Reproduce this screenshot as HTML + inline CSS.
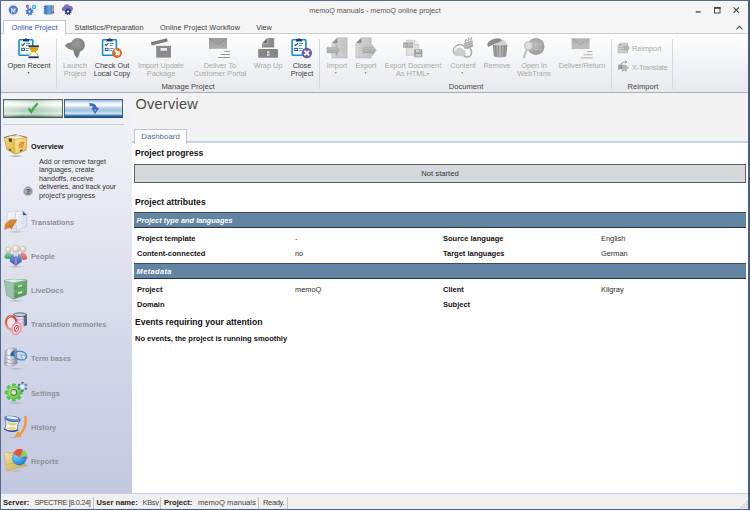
<!DOCTYPE html>
<html><head><meta charset="utf-8">
<style>
*{box-sizing:border-box;margin:0;padding:0}
html,body{width:750px;height:510px;overflow:hidden;background:#f3f4f6}
body{font-family:"Liberation Sans","DejaVu Sans",sans-serif;font-size:7.6px;color:#333;position:relative}
.abs{position:absolute}
#win{position:absolute;left:0;top:0;width:750px;height:510px;border:1px solid #566a8e;border-right:2px solid #465d88;border-bottom-color:#465d88;overflow:hidden;background:#f3f4f6}
#title{position:absolute;left:0;top:0;width:748px;height:19px;background:#f5f5f6}
#title .t{position:absolute;left:0;width:748px;text-align:center;top:5px;font-size:7.2px;color:#555}
#tabs{position:absolute;left:0;top:19px;width:748px;height:14px;background:#f5f5f6;border-bottom:1px solid #c9cdd6}
.tab{position:absolute;top:2px;height:12px;line-height:11px;font-size:7.3px;color:#3b3b3b;text-align:center;white-space:nowrap}
.tab.act{top:0px;height:14px;line-height:13.500px;background:#fff;border:1px solid #c3c8d2;border-bottom:none;color:#2b579a;height:15px}
#ribbon{position:absolute;left:0;top:33px;width:748px;height:59px;background:linear-gradient(#ffffff,#f3f4f7 45%,#e6e8ec);border-bottom:1px solid #a9aeb7}
.rb{position:absolute;top:28px;text-align:center;font-size:7.3px;line-height:8.2px;color:#a9a9a9;white-space:nowrap;transform:translateX(-50%)}
.rb.on{color:#3a3a3a}
.dd{display:inline-block;position:relative;top:-2.700px;left:-1px;width:0;height:0;border-left:1.800px solid transparent;border-right:1.800px solid transparent;border-top:2px solid #8a8a8a}.rb.on .dd{border-top-color:#555}
.grp{position:absolute;top:48px;font-size:7.6px;color:#444;transform:translateX(-50%);white-space:nowrap}
.sep{position:absolute;top:5px;width:1px;height:50px;background:#d4d7de}
.ic{position:absolute}
#strip{position:absolute;left:0;top:92px;width:748px;height:5px;background:#f2f2f3}
#left{position:absolute;left:0;top:92px;width:131px;height:400px;background:linear-gradient(#f1f2f6 0,#ecedf3 20%,#d6d9ea 60%,#c3c7e0 100%)}
.nav{position:absolute;left:30px;font-size:7.3px;font-weight:bold;color:#909098;white-space:nowrap}
#main{position:absolute;left:131px;top:92px;width:616px;height:400px;background:#fff}
#mainhead{position:absolute;left:0;top:0;width:616px;height:50px;background:#f2f2f3;border-bottom:2px solid #c9d3e1}
#status{position:absolute;left:0;top:492px;width:748px;height:16px;background:#f0f0f1;border-top:1px solid #c9cde0;font-size:7.6px;line-height:15px;color:#444;white-space:nowrap}
.st{position:absolute;top:0.500px;font-style:normal}#status b{color:#222}.vs{position:absolute;top:3px;width:1px;height:12px;background:#c4c4c8}
.h{position:absolute;font-weight:bold;font-size:8.6px;color:#111;white-space:nowrap}
.lbl{position:absolute;font-weight:bold;font-size:7.5px;color:#111;white-space:nowrap}
.val{position:absolute;font-size:7.4px;color:#2a2a2a;white-space:nowrap}
.bar{position:absolute;left:2px;width:612px;height:16px;background:#6283a1;border-top:1px solid #3a4c5e;border-bottom:1px solid #27333f;color:#fff;font-style:italic;font-weight:bold;font-size:7.4px;line-height:15.500px;padding-left:2.600px}
</style></head><body>
<div id="win">
 <div id="title"><div class="t">memoQ manuals - memoQ online project</div>
  <svg class="abs" style="left:0;top:0" width="748" height="19" viewBox="0 0 748 19">
   <rect x="694.700" y="10.300" width="5" height="1.300" fill="#444"/>
   <rect x="713.500" y="6.500" width="5.500" height="5.500" fill="none" stroke="#444" stroke-width="1"/><rect x="713" y="6" width="6.500" height="1.800" fill="#444"/>
   <path d="M732.500 6.300 l5.500 5.500 M738 6.300 l-5.500 5.500" stroke="#444" stroke-width="1.2" fill="none"/>
  </svg>
 </div>
 <div id="tabs">
  <div class="tab act" style="left:2px;width:63px">Online Project</div>
  <div class="tab" style="left:65px;width:86px">Statistics/Preparation</div>
  <div class="tab" style="left:150px;width:98px;letter-spacing:0.1px">Online Project Workflow</div>
  <div class="tab" style="left:247px;width:32px">View</div>
  <svg class="abs" style="left:733px;top:4px" width="10" height="8"><path d="M2.500 5.300 l3-3 l3 3" stroke="#555" stroke-width="1.200" fill="none"/></svg>
 </div>
 <div id="ribbon">
  <div class="rb on" style="left:28px">Open Recent<br><i class="dd"></i></div>
  <div class="sep" style="left:55px"></div>
  <div class="rb" style="left:74px">Launch<br>Project</div>
  <div class="rb on" style="left:111px">Check Out<br>Local Copy</div>
  <div class="rb" style="left:160px">Import Update<br>Package</div>
  <div class="rb" style="left:219px">Deliver To<br>Customer Portal</div>
  <div class="rb" style="left:267px">Wrap Up</div>
  <div class="rb on" style="left:301px">Close<br>Project</div>
  <div class="grp" style="left:187px">Manage Project</div>
  <div class="sep" style="left:318px"></div>
  <div class="rb" style="left:336px">Import<br><i class="dd"></i></div>
  <div class="rb" style="left:365px">Export<br><i class="dd"></i></div>
  <div class="rb" style="left:412px">Export Document<br>As HTML <i class="dd" style="top:-1.500px;margin-left:0"></i></div>
  <div class="rb" style="left:462px">Content<br><i class="dd"></i></div>
  <div class="rb" style="left:496px">Remove</div>
  <div class="rb" style="left:533px">Open in<br>WebTrans</div>
  <div class="rb" style="left:581px">Deliver/Return</div>
  <div class="grp" style="left:465px">Document</div>
  <div class="sep" style="left:610px"></div>
  <div class="rb" style="left:646px;top:11px;transform:none;left:631px">Reimport</div>
  <div class="rb" style="left:646px;top:30px;transform:none;left:631px;letter-spacing:-0.2px">X-Translate</div>
  <div class="grp" style="left:642px">Reimport</div>
  <div class="sep" style="left:671px"></div>
 </div>
 <div id="main">
  <div id="mainhead">
   <div class="abs" style="left:3.500px;top:3px;font-size:14.5px;color:#4a4a4a;letter-spacing:0.25px">Overview</div>
   <div class="abs" style="left:2px;top:36px;width:53px;height:15px;background:#fff;border:1px solid #b9c6d8;border-bottom:none;text-align:center;font-size:7.9px;line-height:13px;color:#4a6a94">Dashboard</div>
  </div>
  <div class="h" style="left:3px;top:55px">Project progress</div>
  <div class="abs" style="left:2px;top:71px;width:612px;height:19px;background:#d6d9dc;border:1px solid #5c6064;text-align:center;font-size:7.7px;line-height:17.800px;color:#333">Not started</div>
  <div class="h" style="left:3px;top:104px">Project attributes</div>
  <div class="bar" style="top:119px">Project type and languages</div>
  <div class="lbl" style="left:5px;top:141px">Project template</div><div class="val" style="left:163px;top:141px">-</div>
  <div class="lbl" style="left:311px;top:141px">Source language</div><div class="val" style="left:469px;top:141px">English</div>
  <div class="lbl" style="left:5px;top:156px">Content-connected</div><div class="val" style="left:163px;top:156px">no</div>
  <div class="lbl" style="left:311px;top:156px">Target languages</div><div class="val" style="left:469px;top:156px">German</div>
  <div class="bar" style="top:170px" ><span style="letter-spacing:0.4px">Metadata</span></div>
  <div class="lbl" style="left:5px;top:192.300px">Project</div><div class="val" style="left:163px;top:192.300px">memoQ</div>
  <div class="lbl" style="left:311px;top:192.300px">Client</div><div class="val" style="left:469px;top:192.300px">Kilgray</div>
  <div class="lbl" style="left:5px;top:206.500px">Domain</div>
  <div class="lbl" style="left:311px;top:206.500px">Subject</div>
  <div class="h" style="left:3px;top:224px">Events requiring your attention</div>
  <div class="lbl" style="left:3px;top:241px">No events, the project is running smoothly</div>
 </div>
 <div id="left">
  <div class="abs" style="left:2px;top:6px;width:60px;height:19px;border:1px solid #5a6a60;border-bottom-color:#3f5a49;background:linear-gradient(90deg,rgba(255,255,255,.35),rgba(255,255,255,0) 30%,rgba(120,170,140,.18) 55%,rgba(255,255,255,.3) 90%),linear-gradient(#9dbfa9 0,#e9f3ec 12%,#fbfdfb 28%,#c5dccd 50%,#b6d2c0 65%,#d6e7dc 80%,#9dbfa9 90%,#5b8a6c 96%,#3e6b4f 100%)"></div>
  <div class="abs" style="left:63px;top:6px;width:59px;height:19px;border:1px solid #4a5a7c;border-bottom-color:#2a4a7a;background:linear-gradient(#8fb0dc 0,#dbe8f5 14%,#ffffff 30%,#bcd6ea 45%,#a3c6e0 56%,#a9cbe4 68%,#d9e8f4 79%,#7aaad6 87%,#2a6cb0 94%,#15508f 100%)"></div>
  <div class="abs" style="left:2px;top:31px;width:121px;height:1px;background:#c9cbd3"></div>
  <div class="nav" style="top:48.500px;color:#111">Overview</div>
  <div class="abs" style="left:38px;top:65px;font-size:7.15px;line-height:8.4px;color:#333">Add or remove target<br><span style="letter-spacing:-0.08px">languages, create</span><br>handoffs, receive<br><span style="letter-spacing:-0.1px">deliveries, and track your</span><br>project's progress</div>
  <div class="nav" style="top:125px">Translations</div>
  <div class="nav" style="top:159px">People</div>
  <div class="nav" style="top:193px">LiveDocs</div>
  <div class="nav" style="top:227px">Translation memories</div>
  <div class="nav" style="top:261px">Term bases</div>
  <div class="nav" style="top:296px">Settings</div>
  <div class="nav" style="top:330px">History</div>
  <div class="nav" style="top:364px">Reports</div>
 </div>
 <div id="status">
  <b class="st" style="left:2px">Server:</b><span class="st" style="left:33.500px;letter-spacing:-0.47px">SPECTRE [8.0.24]</span><i class="vs" style="left:92px"></i>
  <b class="st" style="left:95.500px">User name:</b><span class="st" style="left:141.500px;letter-spacing:-0.4px">KBsv</span><i class="vs" style="left:159px"></i>
  <b class="st" style="left:163px">Project:</b><span class="st" style="left:197px">memoQ manuals</span><i class="vs" style="left:257px"></i>
  <span class="st" style="left:262px;letter-spacing:-0.4px">Ready.</span><i class="vs" style="left:286px"></i>
 </div>
<svg class="abs" style="left:-1px;top:-1px;pointer-events:none" width="750" height="510" viewBox="0 0 750 510">
<defs>
 <linearGradient id="gDoc" x1="0" y1="0" x2="1" y2="0"><stop offset="0" stop-color="#dcdcdc"/><stop offset="1" stop-color="#c4c4c4"/></linearGradient>
 <linearGradient id="gArr" x1="0" y1="0" x2="0" y2="1"><stop offset="0" stop-color="#c9c9c9"/><stop offset="1" stop-color="#9c9c9c"/></linearGradient>
 <radialGradient id="gBall" cx="0.4" cy="0.4" r="0.7"><stop offset="0" stop-color="#9a9a9a"/><stop offset="1" stop-color="#7e7e7e"/></radialGradient>
 <linearGradient id="gEnv" x1="0" y1="0" x2="0" y2="1"><stop offset="0" stop-color="#9a9a9a"/><stop offset="1" stop-color="#adadad"/></linearGradient>
 
 
</defs>

<!-- title bar small icons -->
<g>
 <defs><radialGradient id="gOrb" cx="0.500" cy="0.400" r="0.600"><stop offset="0" stop-color="#6f9ae0"/><stop offset="0.700" stop-color="#4472c4"/><stop offset="1" stop-color="#aebfe6"/></radialGradient>
 <linearGradient id="gNb" x1="0" y1="0" x2="1" y2="0"><stop offset="0" stop-color="#2f74c8"/><stop offset="0.600" stop-color="#6aa6e2"/><stop offset="1" stop-color="#3a80d0"/></linearGradient></defs>
 <circle cx="13.300" cy="10.100" r="4.700" fill="url(#gOrb)"/>
 <path d="M11.300 8 q0.800 2.500 0.300 4.800 M15.200 8 q-0.800 2.500-0.300 4.800 M12.300 9 l1 3 l1-3" stroke="#eef3fc" stroke-width="0.800" fill="none"/>
 <circle cx="29.500" cy="11.600" r="3.300" fill="none" stroke="#3d7cc9" stroke-width="1.400" stroke-dasharray="1.300 1.290"/>
 <circle cx="29.500" cy="11.600" r="2.900" fill="#3d7cc9"/><circle cx="29.500" cy="11.600" r="1.100" fill="#e8f0fa"/>
 <circle cx="34.100" cy="7" r="2.300" fill="#3fb4dc"/><circle cx="34.100" cy="7" r="0.900" fill="#d8f1f8"/>
 <rect x="26.100" y="4.900" width="2.700" height="2.800" fill="#8c4a9e"/><rect x="27" y="5.800" width="0.900" height="0.900" fill="#dcc4e4"/>
 <rect x="44.500" y="5.300" width="8" height="9.300" rx="1" fill="url(#gNb)"/>
 <rect x="43.600" y="6.200" width="2" height="1" rx="0.500" fill="#2458a6"/><rect x="43.600" y="8.300" width="2" height="1" rx="0.500" fill="#2458a6"/><rect x="43.600" y="10.400" width="2" height="1" rx="0.500" fill="#2458a6"/><rect x="43.600" y="12.500" width="2" height="1" rx="0.500" fill="#2458a6"/>
 <rect x="52.500" y="5.500" width="1.600" height="2.500" fill="#5cae4a"/><rect x="52.500" y="8.200" width="1.600" height="2.600" fill="#e7792b"/><rect x="52.500" y="11" width="1.600" height="2.500" fill="#8e44ad"/>
 <path d="M63 11 a2.500 2.500 0 0 1 0.800-4.600 a3.300 3.300 0 0 1 6-0.300 a2.500 2.500 0 0 1 1.200 4.900 z" fill="#8670be"/>
 <circle cx="68" cy="11.600" r="2.800" fill="none" stroke="#2a3a80" stroke-width="1.400" stroke-dasharray="1.100 1.100"/>
 <circle cx="68" cy="11.600" r="2.600" fill="#2a3a80"/><circle cx="68" cy="11.600" r="1.150" fill="#f4f5f7"/>
</g>

<!-- ribbon: Open Recent -->
<g transform="translate(18.200 37.600)">
  <rect x="0.800" y="2.100" width="13.800" height="15.500" rx="0.800" fill="#fff" stroke="#0c8fd9" stroke-width="1.600"/>
  <path d="M4.700 3.900 v-2.500 h1.800 q1.250-1.700 2.500 0 h1.800 v2.500 z" fill="#1f3882"/>
  <path d="M3.300 6.700 l1.200 1.200 l2.100-2.400" stroke="#1f3882" stroke-width="1.100" fill="none"/>
  <rect x="7.700" y="5.500" width="4.100" height="0.850" fill="#1490d8"/><rect x="7.700" y="7.500" width="2.800" height="0.850" fill="#1490d8"/>
  <rect x="3.500" y="10.700" width="2.800" height="2.300" fill="#fff" stroke="#26408a" stroke-width="0.900"/>
  <rect x="7.700" y="10.600" width="4.100" height="0.850" fill="#1490d8"/><rect x="7.700" y="12.500" width="2.800" height="0.850" fill="#1490d8"/>
 </g>
<g>
 <rect x="28.800" y="46.200" width="9.800" height="10.800" fill="#fff"/>
 <path d="M29.500 47 h8.600 q0 3.500-3.300 5 q3.300 1.500 3.300 4.600 h-8.600 q0-3.100 3.300-4.600 q-3.300-1.500-3.300-5 z" fill="#fff" stroke="#d9a500" stroke-width="0.900"/>
 <path d="M29.500 47 h8.600 q0 2.800-2 4.200 q-2.300 1.400-4.600 0 q-2-1.400-2-4.200 z" fill="#d9a500"/>
 <rect x="28.400" y="45.300" width="10.400" height="1.700" fill="#1f3882"/><rect x="28.400" y="56.500" width="10.400" height="1.700" fill="#1f3882"/>
</g>
<!-- Launch Project -->
<g>
 <path d="M64.600 45.300 Q68 42.400 71.800 42.200 L72.600 50.200 Q68 49.600 64.600 45.300 z" fill="#858585"/>
 <path d="M73.200 50.500 L80 51 Q79.600 55 77.500 58 Q76.800 58.300 76.300 57.600 Q74.300 55 73.200 50.500 z" fill="#7e7e7e"/>
 <circle cx="77.800" cy="45" r="7.100" fill="url(#gBall)"/>
 <path d="M76.500 38.200 q-3.800 6.800 0.300 13.500" stroke="#777" stroke-width="0.600" fill="none" opacity="0.500"/>
</g>
<!-- Check out -->
<g transform="translate(101.800 37.600)">
  <rect x="0.800" y="2.100" width="13.800" height="15.500" rx="0.800" fill="#fff" stroke="#0c8fd9" stroke-width="1.600"/>
  <path d="M4.700 3.900 v-2.500 h1.800 q1.250-1.700 2.500 0 h1.800 v2.500 z" fill="#1f3882"/>
  <path d="M3.300 6.700 l1.200 1.200 l2.100-2.400" stroke="#1f3882" stroke-width="1.100" fill="none"/>
  <rect x="7.700" y="5.500" width="4.100" height="0.850" fill="#1490d8"/><rect x="7.700" y="7.500" width="2.800" height="0.850" fill="#1490d8"/>
  <rect x="3.500" y="10.700" width="2.800" height="2.300" fill="#fff" stroke="#26408a" stroke-width="0.900"/>
  <rect x="7.700" y="10.600" width="4.100" height="0.850" fill="#1490d8"/><rect x="7.700" y="12.500" width="2.800" height="0.850" fill="#1490d8"/>
 </g>
<circle cx="117" cy="53" r="5" fill="#e2661f"/>
<path d="M114.300 50.400 l1.300-1.300 l2.700 2.700 l1.400-1.400 v4.900 h-4.900 l1.400-1.400 z" fill="#fff"/>
<!-- Import Update Package -->
<path d="M150.800 42.200 L167 38.300 L167.800 41.600 L151.600 45.500 z" fill="#7c7c7c"/>
<rect x="156.200" y="45.800" width="14.800" height="11.800" fill="#8b8b8b"/>
<rect x="160.500" y="48" width="6.500" height="2.700" fill="#ededed"/>
<!-- Deliver to customer portal -->
<g transform="translate(209 38)">
  <rect x="0" y="0" width="18" height="10.800" fill="url(#gEnv)"/>
  <path d="M0.300 0.300 L9 6.300 L17.700 0.300" stroke="#8a8a8a" stroke-width="0.900" fill="none"/>
  <rect x="15.500" y="12.900" width="5.500" height="0.900" fill="#8d8d8d"/><rect x="11.800" y="16" width="9.200" height="0.900" fill="#8d8d8d"/><rect x="9" y="19.100" width="12" height="0.900" fill="#8d8d8d"/>
 </g>
<!-- Wrap up -->
<path d="M267.500 38.100 h6.700 v9.400 h-12.200 v-4 z" fill="#8c8c8c"/>
<path d="M267.500 38.100 v5.400 h-5.500 z" fill="#6f6f6f"/>
<path d="M267.900 38.100 v5.800 h-5.900" stroke="#d5d5d5" stroke-width="0.700" fill="none"/>
<rect x="258.200" y="49" width="19.800" height="8.700" rx="1.200" fill="#858585"/>
<rect x="267" y="51" width="2.500" height="5" fill="#d0d0d0"/><rect x="267" y="53.200" width="2.500" height="0.700" fill="#9a9a9a"/>
<!-- Close project -->
<g transform="translate(291.300 37.600)">
  <rect x="0.800" y="2.100" width="13.800" height="15.500" rx="0.800" fill="#fff" stroke="#0c8fd9" stroke-width="1.600"/>
  <path d="M4.700 3.900 v-2.500 h1.800 q1.250-1.700 2.500 0 h1.800 v2.500 z" fill="#1f3882"/>
  <path d="M3.300 6.700 l1.200 1.200 l2.100-2.400" stroke="#1f3882" stroke-width="1.100" fill="none"/>
  <rect x="7.700" y="5.500" width="4.100" height="0.850" fill="#1490d8"/><rect x="7.700" y="7.500" width="2.800" height="0.850" fill="#1490d8"/>
  <rect x="3.500" y="10.700" width="2.800" height="2.300" fill="#fff" stroke="#26408a" stroke-width="0.900"/>
  <rect x="7.700" y="10.600" width="4.100" height="0.850" fill="#1490d8"/><rect x="7.700" y="12.500" width="2.800" height="0.850" fill="#1490d8"/>
 </g>
<circle cx="306.800" cy="53" r="5.200" fill="#6b59a7"/>
<path d="M304.400 50.600 l4.800 4.800 M309.200 50.600 l-4.800 4.800" stroke="#fff" stroke-width="1.900" fill="none"/>
<!-- Import -->
<g>
 <path d="M337.500 37.800 h9.600 v20.100 h-15.100 v-14.600 z" fill="url(#gDoc)" stroke="#a9a9a9" stroke-width="0.600"/>
 <path d="M337.500 37.800 v5.500 h-5.500 z" fill="#8e8e8e"/>
 <path d="M339 41.500 h6.500 M334 45 h11.500 M334 48 h11.500 M341 51 h4.500 M341 53.500 h4.500 M334 56 h6" stroke="#b5b5b5" stroke-width="0.600"/>
 <path d="M327 47.300 h9 v-2.500 l4 5.400 l-4 5.400 v-2.700 h-9 z" fill="url(#gArr)" stroke="#a0a0a0" stroke-width="0.500"/>
</g>
<!-- Export -->
<g>
 <path d="M361.500 37.800 h9.600 v20.100 h-15.100 v-14.600 z" fill="url(#gDoc)" stroke="#a9a9a9" stroke-width="0.600"/>
 <path d="M361.500 37.800 v5.500 h-5.500 z" fill="#8e8e8e"/>
 <path d="M363 41.500 h6.500 M358 45 h11.500 M358 48 h5 M358 51 h5 M358 53.500 h5 M358 56 h6" stroke="#b5b5b5" stroke-width="0.600"/>
 <path d="M363 47.300 h9 v-2.500 l4.300 5.400 l-4.300 5.400 v-2.700 h-9 z" fill="url(#gArr)" stroke="#a0a0a0" stroke-width="0.500"/>
</g>
<!-- Export as HTML -->
<g>
 <path d="M406.200 40.100 h8.300 l4.500 4.500 v10.700 h-12.800 z" fill="#dedede" stroke="#c4c4c4" stroke-width="0.600"/>
 <path d="M414.500 40.100 v4.500 h4.500" fill="#efefef" stroke="#c4c4c4" stroke-width="0.600"/>
 <rect x="403.200" y="42.500" width="9.700" height="5.200" fill="#a2a2a2"/>
 <path d="M404.800 43.800 v2.600 M406.300 43.800 v2.600 M404.800 45.100 h1.500 M407.500 43.800 h1.800 M408.400 43.800 v2.600 M410.300 46.400 v-2.600 l0.800 1.200 l0.800-1.200 v2.600" stroke="#d4d4d4" stroke-width="0.600" fill="none"/>
 <rect x="414.300" y="49.200" width="8" height="8" rx="0.600" fill="#9a9a9a"/>
 <rect x="416" y="49.800" width="4.600" height="2.600" fill="#d9d9d9"/><rect x="418.700" y="50.200" width="1.100" height="1.800" fill="#9a9a9a"/>
 <rect x="415.500" y="54" width="5.600" height="2.600" fill="#c9c9c9"/>
</g>
<!-- Content -->
<g>
 <path d="M470 48 q2.300 3 1.300 6 q-1.300 3.300-4.500 3 q-2-0.200-3-1.500" stroke="#a9a9a9" stroke-width="1.500" fill="none"/>
 <path d="M453.600 53.500 q-1.200-4.500 2-7.300 q3.700-3 7.500-0.700 q1.600 1.200 2.400 3.300" stroke="#acacac" stroke-width="1.300" fill="none"/>
 <path d="M456 55.600 a2.700 2.700 0 0 1 0.200-5.300 a3.800 3.800 0 0 1 6.800-0.300 a2.900 2.900 0 0 1 0.600 5.600 z" fill="#cdcdcd" stroke="#bababa" stroke-width="0.500"/>
 <path d="M463.700 43.300 l8-3 l1 0.800 l0.300 5.500 l-5.800 2.600 q-3-1.400-3.500-5.900 z" fill="#a9a9a9"/>
 <path d="M465 42.300 l1.300-3.600 M467.800 41.300 l1.300-3.800 M470.600 40.300 l1.200-3.300" stroke="#a9a9a9" stroke-width="1.400"/>
 <path d="M464.300 44.800 l8.300-3.100 M464.900 46.800 l8-3" stroke="#d6d6d6" stroke-width="0.700"/>
</g>
<!-- Remove -->
<g>
 <defs><linearGradient id="gBin" x1="0" y1="0" x2="1" y2="0"><stop offset="0" stop-color="#8e8e8e"/><stop offset="0.500" stop-color="#bdbdbd"/><stop offset="1" stop-color="#8a8a8a"/></linearGradient></defs>
 <path d="M494.500 45 q2.500-4.800 7-5.300 q4.500 0 5.600 5.300 z" fill="#d4d4d4"/>
 <path d="M492.700 44.900 h14.700 l-1.200 11.500 q-6.100 2.200-12.300 0 z" fill="url(#gBin)"/>
 <path d="M495.600 46 l0.600 10.600 M498.500 46 l0.300 11.200 M501.500 46 l-0.300 11.200 M504.400 46 l-0.600 10.600" stroke="#7c7c7c" stroke-width="0.800" opacity="0.800"/>
 <path d="M487.300 44.300 Q488 41 493 39.300 Q498.500 37.300 501.300 39.300 L501.800 40.800 L488 47 z" fill="#8b8b8b"/>
</g>
<!-- Open in WebTrans -->
<g>
 <defs><radialGradient id="gGlobe" cx="0.450" cy="0.400" r="0.700"><stop offset="0" stop-color="#bdbdbd"/><stop offset="1" stop-color="#8c8c8c"/></radialGradient></defs>
 <circle cx="536" cy="46.500" r="8.500" fill="url(#gGlobe)"/>
 <path d="M528 44 h16 M528.500 49.500 h15.500 M536 38 v17 M532 39 q-2.500 7.500 0 15 M540 39 q2.500 7.500 0 15" stroke="#c9c9c9" stroke-width="0.600" fill="none" opacity="0.800"/>
 <path d="M526.800 49.500 L523.800 57.500" stroke="#c3c3c3" stroke-width="2.200" stroke-linecap="round"/>
 <circle cx="528.600" cy="45.800" r="4" fill="#dedede" stroke="#bdbdbd" stroke-width="1.100"/>
</g>
<!-- Deliver/Return -->
<g transform="translate(571.600 38.300)" opacity="0.750">
  <rect x="0" y="0" width="18" height="10.800" fill="url(#gEnv)"/>
  <path d="M0.300 0.300 L9 6.300 L17.700 0.300" stroke="#8a8a8a" stroke-width="0.900" fill="none"/>
  <rect x="15.500" y="12.900" width="5.500" height="0.900" fill="#8d8d8d"/><rect x="11.800" y="16" width="9.200" height="0.900" fill="#8d8d8d"/><rect x="9" y="19.100" width="12" height="0.900" fill="#8d8d8d"/>
 </g>
<!-- Reimport small -->
<g>
 <path d="M620.500 43.200 h7 v9.600 h-9.400 v-7.200 z" fill="#cfcfcf" stroke="#a9a9a9" stroke-width="0.600"/>
 <path d="M620.500 43.200 v2.400 h-2.400 z" fill="#9a9a9a"/>
 <path d="M619.500 47.500 h6.500 M619.500 49.500 h6.500" stroke="#a5a5a5" stroke-width="0.600"/>
 <path d="M624 46 h3.200 v-1.500 l2.300 3.600 l-2.300 3.600 v-1.600 h-3.200 z" fill="#b5b5b5" stroke="#9a9a9a" stroke-width="0.400"/>
</g>
<!-- X-translate small -->
<g>
 <path d="M618.200 64.500 h4.500 v5.500 l-2.200-1.200 l-2.300 1.200 z" fill="#9c9c9c"/>
 <path d="M622.200 65.500 h4 v5.800 l-2 -1.200 l-2 1.200 z" fill="#b9b9b9" stroke="#8f8f8f" stroke-width="0.500"/>
 <path d="M621 64 q2-2.800 5.500-2 M625.300 60.600 l1.700 1.500 l-2 1.200" stroke="#8f8f8f" stroke-width="0.900" fill="none"/>
 <path d="M626.500 66.500 l1.800 1.200 l-1.800 1.200" stroke="#8f8f8f" stroke-width="0.700" fill="none"/>
</g>
<!-- left panel buttons glyphs -->
<path d="M28.800 108.300 L31.300 112 Q33.800 107 37.800 103.300" stroke="#1d6a28" stroke-width="2.300" fill="none" opacity="0.450"/><path d="M28.800 108.300 L31.300 112 Q33.800 107 37.800 103.300" stroke="#2aa838" stroke-width="1.400" fill="none"/>
<path d="M89 103.500 h3 q3.800 0.300 4.800 4.500 h1.800 l-3.600 5.700 l-3.300-5.700 h1.800 q-0.500-2-1.800-2.300 h-2.500 l1-1.100 z" fill="#3d6cbc" stroke="#2f57a8" stroke-width="0.400"/><path d="M94 109.500 h2.200 l-1.200 2 z" fill="#a9c6ea"/>

<defs>
 <radialGradient id="gSh" cx="0.500" cy="0.500" r="0.500"><stop offset="0" stop-color="#8b93a8" stop-opacity="0.750"/><stop offset="1" stop-color="#8b93a8" stop-opacity="0"/></radialGradient>
 <linearGradient id="gBoxL" x1="0" y1="0" x2="1" y2="1"><stop offset="0" stop-color="#f3dc7c"/><stop offset="1" stop-color="#d9b23c"/></linearGradient>
 <linearGradient id="gBoxR" x1="0" y1="0" x2="1" y2="1"><stop offset="0" stop-color="#f8e79a"/><stop offset="1" stop-color="#e3c557"/></linearGradient>
 <linearGradient id="gOr" x1="0" y1="0" x2="1" y2="1"><stop offset="0" stop-color="#e89a4a"/><stop offset="1" stop-color="#c4681c"/></linearGradient>
 <linearGradient id="gPaper" x1="0" y1="0" x2="1" y2="1"><stop offset="0" stop-color="#ffffff"/><stop offset="1" stop-color="#cfdaec"/></linearGradient>
 <radialGradient id="gHead" cx="0.400" cy="0.350" r="0.700"><stop offset="0" stop-color="#fffdf6"/><stop offset="1" stop-color="#c9bda6"/></radialGradient>
 <linearGradient id="gGrn" x1="0" y1="0" x2="1" y2="1"><stop offset="0" stop-color="#b5d5c0"/><stop offset="1" stop-color="#4d8a64"/></linearGradient>
 <linearGradient id="gGrn2" x1="0" y1="0" x2="0" y2="1"><stop offset="0" stop-color="#7dbb74"/><stop offset="1" stop-color="#559a52"/></linearGradient>
 <linearGradient id="gSilver" x1="0" y1="0" x2="1" y2="0"><stop offset="0" stop-color="#9aa0ae"/><stop offset="0.350" stop-color="#f4f5f9"/><stop offset="1" stop-color="#7d8494"/></linearGradient>
 <linearGradient id="gDb" x1="0" y1="0" x2="1" y2="0"><stop offset="0" stop-color="#c9c0dc"/><stop offset="0.600" stop-color="#e9e4f2"/><stop offset="1" stop-color="#56607a"/></linearGradient>
 <linearGradient id="gFold" x1="0" y1="0" x2="1" y2="1"><stop offset="0" stop-color="#f2e3a1"/><stop offset="1" stop-color="#c9a63e"/></linearGradient>
 <radialGradient id="gPie" cx="0.350" cy="0.300" r="0.800"><stop offset="0" stop-color="#7fd4ff"/><stop offset="1" stop-color="#0d78d6"/></radialGradient>
 <radialGradient id="gGear" cx="0.450" cy="0.450" r="0.600"><stop offset="0" stop-color="#dcf7a4"/><stop offset="0.600" stop-color="#7ed65a"/><stop offset="1" stop-color="#4cb83e"/></radialGradient>
</defs>

<!-- Overview box -->
<ellipse cx="15.800" cy="156.200" rx="9" ry="1.400" fill="url(#gSh)"/>
<path d="M4.100 137.400 L15.600 139.300 L15.600 154.400 L6.800 149.400 z" fill="url(#gBoxL)"/>
<path d="M15.600 139.300 L26.800 137.400 L26.200 150 L15.600 154.400 z" fill="url(#gBoxR)"/>
<path d="M4.100 137.400 L12.500 135.300 L16.500 134.400 L20.500 135.500 L26.800 137.400 L15.600 139.300 z" fill="#fcf6d2"/>
<path d="M4.100 137.400 L15.600 139.300 L26.800 137.400 L26.200 150 L15.600 154.400 L6.800 149.400 z" fill="none" stroke="#9a7a2a" stroke-width="0.500"/>
<path d="M4.300 137.300 L12.600 135.300 L16.500 134.500 M12.800 135.500 L20.300 135.700 L26.600 137.300" stroke="#5e4826" stroke-width="0.700" fill="none"/>
<path d="M9 136.500 l8-1.500 l3.200 0.700 l-8.500 2.200 z" fill="#efe6bf"/>
<path d="M8.800 138.200 l3 0.500 v3.500 l-3-0.700 z" fill="#4f3c24"/>
<path d="M8.700 149.700 l0.200-1.300 l2.200 1 l0.200 1.900 z M19.800 151.900 l0.200-1.700 l2.400-1 l0.100 1.600 z" fill="#6a4e20"/>
<path d="M19.400 143.600 l3.800-1.700 l0.300 3.700 l-3.800 1.900 z M18.400 145.900 l6.300-3.400 M20.800 141.600 l1.400 6.700" stroke="#ea7a2e" stroke-width="0.900" fill="none"/>
<!-- help -->
<circle cx="28" cy="191.200" r="4.600" fill="#9a9a9a" stroke="#c9c9cc" stroke-width="0.800"/>
<circle cx="27.300" cy="190.300" r="2.800" fill="#b5b5b5" opacity="0.700"/>
<text x="28" y="193.800" font-family="Liberation Sans,sans-serif" font-size="6.800" font-weight="bold" fill="#3c3c3c" text-anchor="middle">?</text>

<!-- Translations -->
<ellipse cx="15.800" cy="231.800" rx="9.500" ry="1.400" fill="url(#gSh)" opacity="0.700"/>
<path d="M7.500 212.500 L17 210.800 L17.500 229.500 L8 227 z" fill="url(#gPaper)" stroke="#b8c4da" stroke-width="0.500"/>
<path d="M15.500 211.800 L22.500 211 L26.800 215 L26.800 226.500 L16.500 230.500 z" fill="url(#gPaper)" stroke="#aebad2" stroke-width="0.500"/>
<path d="M22.500 211 L26.800 215 L23 215.200 z" fill="#2f4f96"/>
<path d="M17.500 214.500 l6-0.800 M17.600 217 l8-1.200 M17.700 219.500 l8-1.400 M17.800 222 l8-1.600 M17.900 224.500 l6-1.400" stroke="#c3cde0" stroke-width="0.500"/>
<path d="M4.200 229.800 L5 223.800 L10.300 219.300 L17.300 219.500 L14.200 224.800 L11.300 229.800 L10.300 227.800 z" fill="url(#gOr)"/>

<!-- People -->
<defs>
 <linearGradient id="gSuit" x1="0" y1="0" x2="0" y2="1"><stop offset="0" stop-color="#6d9de0"/><stop offset="1" stop-color="#2c5cad"/></linearGradient>
 <linearGradient id="gPg" x1="0" y1="0" x2="0" y2="1"><stop offset="0" stop-color="#8ad4ae"/><stop offset="1" stop-color="#3f9a6c"/></linearGradient>
 <linearGradient id="gPr" x1="0" y1="0" x2="0" y2="1"><stop offset="0" stop-color="#f39a96"/><stop offset="1" stop-color="#d84c4c"/></linearGradient>
</defs>
<ellipse cx="15.800" cy="266.800" rx="9.500" ry="1.300" fill="url(#gSh)" opacity="0.700"/>
<path d="M4.300 258 q0.200-5.300 4.200-5.500 q3.700 0.300 3.700 6 q-4 1-7.900-0.500 z" fill="url(#gPg)"/>
<circle cx="8.300" cy="249.700" r="2.800" fill="url(#gHead)" stroke="#b3a78f" stroke-width="0.400"/>
<path d="M20 254 q1.500-1.900 3.600-1.500 q3.300 1 3.600 6.600 q-2.400 1.200-5 0.500 z" fill="url(#gPr)"/>
<circle cx="23.100" cy="249" r="3" fill="url(#gHead)" stroke="#b3a78f" stroke-width="0.400"/>
<path d="M9.800 261.500 q0.300-6.800 3.700-7.800 l2.300 1.200 l2.300-1.200 q3.500 1 3.900 7.800 q-3.300 2.300-4.800 3.300 l-1.400 1.700 l-1.400-1.700 q-1.800-1-4.600-3.300 z" fill="url(#gSuit)"/>
<path d="M13.500 253.800 l2.300 1.800 l2.300-1.800 l-0.400 3 l-1.900 -0.800 l-1.900 0.800 z" fill="#e9eef8"/>
<path d="M15.200 255.800 h1.300 l0.700 8 l-1.350 2.800 l-1.350-2.800 z" fill="#b878c6"/>
<circle cx="15.700" cy="248.600" r="3.800" fill="url(#gHead)" stroke="#b3a78f" stroke-width="0.400"/>

<!-- LiveDocs -->
<ellipse cx="15.800" cy="300.800" rx="9.500" ry="1.300" fill="url(#gSh)" opacity="0.700"/>
<path d="M4.300 280.200 L13 279.300 L27 280 L26.300 294.500 L13.800 299 L6.800 295.500 z" fill="url(#gGrn)" stroke="#3d7a55" stroke-width="0.500"/>
<path d="M4.300 280.200 L13 282.300 L13.800 299 L6.800 295.500 z" fill="#9cc4ab"/>
<path d="M4.300 280.200 L13 279.300 L27 280 L13 282.300 z" fill="#dff1e6"/>
<path d="M14.500 283.800 L25 282.200 L24.600 287.200 L14.800 289.500 z" fill="url(#gGrn2)" stroke="#3f8a45" stroke-width="0.400"/>
<path d="M14.900 291 L24.500 288.700 L24.200 293.600 L15.200 296.800 z" fill="url(#gGrn2)" stroke="#3f8a45" stroke-width="0.400"/>
<path d="M18 285.800 l3.800-0.700 v1.200 l-3.800 0.800 z M18.200 292.600 l3.800-1 v1.200 l-3.800 1.100 z" fill="#f1f7f1"/>

<!-- Translation memories -->
<defs><linearGradient id="gRing" x1="0.700" y1="0" x2="0.200" y2="1"><stop offset="0" stop-color="#d8402c"/><stop offset="0.600" stop-color="#e8603c"/><stop offset="1" stop-color="#f2a070"/></linearGradient></defs>
<ellipse cx="19" cy="331.500" rx="7" ry="1.300" fill="url(#gSh)" opacity="0.600"/>
<path d="M13.800 315.500 q6-3.500 12.700-1.500 l0.300 10.800 q-5 4.300-12.500 2.300 z" fill="url(#gDb)"/>
<path d="M26.500 314 l0.300 10.800 q-1 1-2.300 1.500 l-0.300-11.300 z" fill="#3d4860" opacity="0.850"/>
<ellipse cx="20.100" cy="314.700" rx="6.400" ry="1.800" fill="#c9cfdc" stroke="#2f3a52" stroke-width="0.700"/>
<path d="M14.300 319.300 q6 2 12.300-1.200 M14.400 322.800 q6 2 12.300-1.200" stroke="#9f93bd" stroke-width="0.600" fill="none"/>
<ellipse cx="11.300" cy="322.900" rx="5.300" ry="6.700" fill="#ebe8f3" stroke="url(#gRing)" stroke-width="2.300" transform="rotate(-6 11.300 322.900)"/>
<path d="M7.300 319.300 q1.300-3.600 4.600-3.900" stroke="#f6b09a" stroke-width="0.800" fill="none"/>
<ellipse cx="16.500" cy="328.600" rx="4.200" ry="6" fill="#fdf3f4" stroke="#e79bb0" stroke-width="1.800" transform="rotate(20 16.500 328.600)"/>
<ellipse cx="16.500" cy="328.600" rx="2.100" ry="3.600" fill="#fff" stroke="#d63a50" stroke-width="0.900" transform="rotate(20 16.500 328.600)"/>
<path d="M15.200 331 l2.800-5" stroke="#d8402c" stroke-width="1"/>

<!-- Term bases -->
<ellipse cx="15.800" cy="368.800" rx="9.500" ry="1.300" fill="url(#gSh)" opacity="0.700"/>
<path d="M5.200 350.500 q5-4 11.500-2 l0.600 15 q-5.500 4.500-12.800 1.500 z" fill="url(#gSilver)" stroke="#8a8fa0" stroke-width="0.400"/>
<path d="M5 354.500 q5.500 3 12 0.500 M4.800 358.500 q5.500 3 12.300 0.500 M4.600 362 q5.500 3 12.600 0.600" stroke="#8d8aa6" stroke-width="0.600" fill="none"/>
<ellipse cx="20.500" cy="355.500" rx="6.300" ry="4.300" fill="none" stroke="#3d8ccc" stroke-width="1.300" transform="rotate(12 20.500 355.500)"/>
<path d="M10.300 355.800 q0.300-5 5.200-5.500 q-2.500 2.500-1.500 6 z" fill="#205f9e"/>
<path d="M20.300 354.800 l5.800 1.200 l-2 4.600 z" fill="#e3eefa" stroke="#3d8ccc" stroke-width="0.600"/>

<!-- Settings -->
<ellipse cx="15.800" cy="403" rx="9.500" ry="1.300" fill="url(#gSh)" opacity="0.700"/>
<g transform="translate(13.800 392.500)">
 <g fill="#58c046">
  <rect x="-1.900" y="-9" width="3.800" height="18" rx="0.800"/>
  <rect x="-1.900" y="-9" width="3.800" height="18" rx="0.800" transform="rotate(45)"/>
  <rect x="-1.900" y="-9" width="3.800" height="18" rx="0.800" transform="rotate(90)"/>
  <rect x="-1.900" y="-9" width="3.800" height="18" rx="0.800" transform="rotate(135)"/>
 </g>
 <circle r="6.800" fill="url(#gGear)"/>
 <circle r="3" fill="#d5d8e6" stroke="#3f7f2e" stroke-width="1.200"/>
 <path d="M-2.500 1.500 a3 3 0 0 1 1-4" stroke="#f5d34a" stroke-width="0.800" fill="none"/>
</g>
<g transform="translate(22.500 386.800)">
 <g fill="#3a5a4a">
  <rect x="-1.100" y="-4.700" width="2.200" height="9.400"/>
  <rect x="-1.100" y="-4.700" width="2.200" height="9.400" transform="rotate(60)"/>
  <rect x="-1.100" y="-4.700" width="2.200" height="9.400" transform="rotate(120)"/>
 </g>
 <circle r="3.500" fill="#8fb7e6"/>
 <circle r="2.200" fill="#e6ecf6"/>
</g>

<!-- History -->
<ellipse cx="14" cy="437.600" rx="8" ry="1.200" fill="url(#gSh)" opacity="0.600"/>
<path d="M21.500 436.800 L14 437.300 L18 431.500 L19.500 433 Q25.500 427 24.200 416 L26.800 415.800 Q27.800 429 21.200 434.500 z" fill="#f29a2e"/>
<path d="M5 419 q7.500 5 15 1.200 q-3.500 4.500-2.300 9.800 q-6 3-13-0.700 q2.500-5 0.300-10.300 z" fill="#f6f3ea" stroke="#4a5fa8" stroke-width="0.700"/>
<path d="M6.800 421.500 q6 3 11.500 0.800 q-2.200 3-5.500 3.300 q-4-0.300-6-4.100 z" fill="#e3cf6a"/>
<path d="M6.800 428.500 q5-3 10 0 q-5 1.800-10 0 z" fill="#e3cf6a"/>
<ellipse cx="12.500" cy="418.800" rx="8" ry="2.500" fill="#5d8fd6" stroke="#2f4a92" stroke-width="0.500" transform="rotate(8 12.500 418.800)"/>
<ellipse cx="12.300" cy="417.800" rx="6" ry="1.200" fill="#e9f1fb" transform="rotate(8 12.300 417.800)"/>
<path d="M4.300 429 q6.500 4 13.500 1" stroke="#2f4a92" stroke-width="1.400" fill="none"/>

<!-- Reports -->
<ellipse cx="17" cy="471" rx="6.500" ry="1.200" fill="url(#gSh)" opacity="0.700"/>
<path d="M4.300 453.300 L7.300 452.300 L8.300 453.500 L14 452.300 L26.800 465.500 L6.500 471 z" fill="url(#gFold)" stroke="#b99a3c" stroke-width="0.400"/>
<path d="M7 464.500 l12.500-2.500" stroke="#b89a45" stroke-width="0.500"/>
<circle cx="19.200" cy="458.200" r="7.300" fill="url(#gPie)"/>
<path d="M19.200 458.200 L12.800 454.500 A7.300 7.300 0 0 1 22.700 450.500 z" fill="#e2563a" transform="translate(0.300 -1)"/>
<path d="M19.200 458.200 L22.700 450.500 A7.300 7.300 0 0 1 26.500 456.500 z" fill="#8ccf52" transform="translate(0.700 -0.600)"/>
<path d="M19.200 458.200 L26.500 456.500 A7.300 7.300 0 0 1 26.500 459 z" fill="#9a55b5" transform="translate(0.800 0)"/>

<!-- status bar grip -->
<g fill="#b4b6c2"><rect x="746" y="501" width="1.400" height="1.400"/><rect x="746" y="503.600" width="1.400" height="1.400"/><rect x="743.400" y="503.600" width="1.400" height="1.400"/><rect x="746" y="506.200" width="1.400" height="1.400"/><rect x="743.400" y="506.200" width="1.400" height="1.400"/><rect x="740.800" y="506.200" width="1.400" height="1.400"/></g>

</svg>

</div>
</body></html>
